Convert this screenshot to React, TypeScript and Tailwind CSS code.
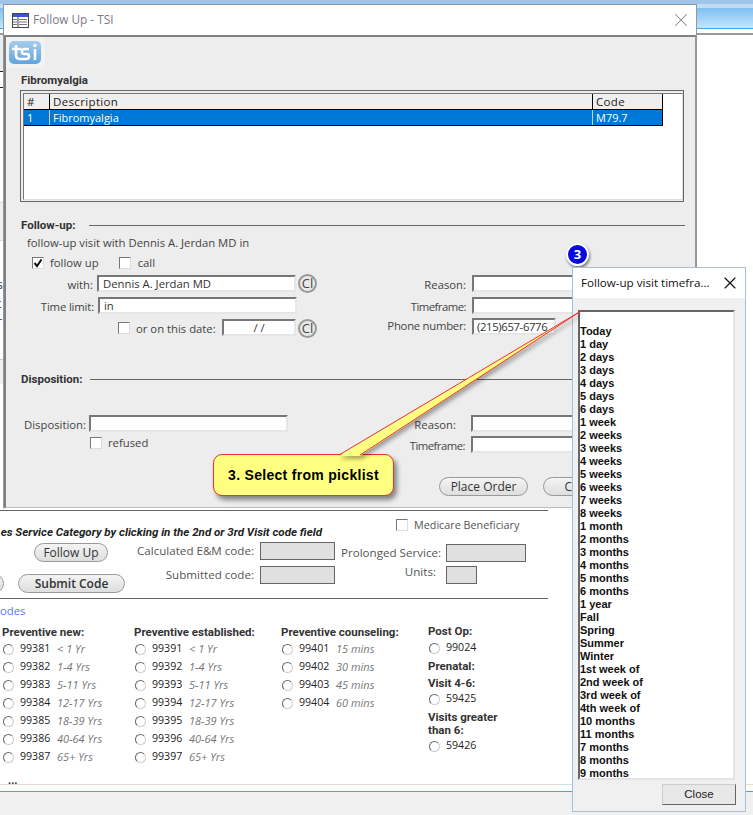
import { X } from 'lucide-react'
import type { ReactNode } from 'react'

const picklist = [
  'Today', '1 day', '2 days', '3 days', '4 days', '5 days', '6 days', '1 week', '2 weeks', '3 weeks',
  '4 weeks', '5 weeks', '6 weeks', '7 weeks', '8 weeks', '1 month', '2 months', '3 months', '4 months',
  '5 months', '6 months', '1 year', 'Fall', 'Spring', 'Summer', 'Winter', '1st week of', '2nd week of',
  '3rd week of', '4th week of', '10 months', '11 months', '7 months', '8 months', '9 months',
]

const codeColumns = [
  {
    title: 'Preventive new:',
    width: 'w-[132px]',
    rows: [['99381', '< 1 Yr'], ['99382', '1-4 Yrs'], ['99383', '5-11 Yrs'], ['99384', '12-17 Yrs'], ['99385', '18-39 Yrs'], ['99386', '40-64 Yrs'], ['99387', '65+ Yrs']],
  },
  {
    title: 'Preventive established:',
    width: 'w-[147px]',
    rows: [['99391', '< 1 Yr'], ['99392', '1-4 Yrs'], ['99393', '5-11 Yrs'], ['99394', '12-17 Yrs'], ['99395', '18-39 Yrs'], ['99396', '40-64 Yrs'], ['99397', '65+ Yrs']],
  },
  {
    title: 'Preventive counseling:',
    width: 'w-[147px]',
    rows: [['99401', '15 mins'], ['99402', '30 mins'], ['99403', '45 mins'], ['99404', '60 mins']],
  },
]

const boldLabel = "font-['Roboto',sans-serif] font-bold text-[11.5px] leading-[14px] text-[#333] whitespace-nowrap"
const label = 'text-[11.3px] leading-[14px] text-[#444] whitespace-nowrap'
const formLabel = 'text-[11.6px] leading-[16px] text-[#555] text-right whitespace-nowrap'

const Check = ({ checked = false }: { checked?: boolean }) => (
  <span className="w-[12px] h-[12px] shrink-0 border border-t-[#777] border-l-[#777] border-r-[#ddd] border-b-[#ddd] bg-white flex items-center justify-center">
    {checked && (
      <svg width="10" height="10" viewBox="0 0 10 10">
        <path d="M1.5 5 L4 8 L8.5 1.5" fill="none" stroke="#111" strokeWidth="2" />
      </svg>
    )}
  </span>
)

const Radio = () => (
  <span className="w-[11px] h-[11px] shrink-0 rounded-full border border-[#ccc] border-t-[#666] border-l-[#666] bg-white" />
)

const Field = ({ className = '', children }: { className?: string; children?: ReactNode }) => (
  <div className={`h-[17px] shrink-0 bg-white border-2 border-t-[#777] border-l-[#777] border-r-[#e6e6e6] border-b-[#e6e6e6] text-[11.3px] leading-[13px] text-[#333] overflow-hidden whitespace-nowrap ${className}`}>
    {children}
  </div>
)

const ClearBtn = () => (
  <span className="w-[19px] h-[19px] rounded-full border-2 border-[#999] bg-[#e8e8e8] flex items-center justify-center text-[13px] leading-none text-[#444] shrink-0">
    Cl
  </span>
)

const Pill = ({ className, children }: { className: string; children?: ReactNode }) => (
  <div className={`h-[19px] shrink-0 rounded-full border border-[#999] bg-gradient-to-b from-[#f4f4f4] to-[#dedede] flex items-center justify-center text-[12px] text-[#333] ${className}`}>
    {children}
  </div>
)

const ReadOnlyBox = ({ className }: { className: string }) => (
  <div className={`h-[18px] shrink-0 bg-[#e0e0e0] border border-[#666] ${className}`} />
)

const Logo = () => (
  <div className="w-[32px] h-[23px] rounded-[5px] bg-gradient-to-b from-[#a5cdee] to-[#5fa4dc]">
    <svg width="32" height="23" viewBox="0 0 32 23">
      <path d="M7 4 V14 Q7 18 11 18 H14 M3 8 H12 M20 8 H15 Q13 8 13 10.5 Q13 13 15 13 H18 Q20 13 20 15.5 Q20 18 17 18 H13 M26 8 V19" fill="none" stroke="#fff" strokeWidth="2.6" />
      <circle cx="26" cy="4.5" r="1.7" fill="#fff" />
    </svg>
  </div>
)

const BackgroundStub = () => (
  <div className="w-[4px] h-[475px] overflow-hidden flex flex-col text-[12px] text-[#333]">
    <div className="h-[37px] shrink-0 border-b border-[#222] bg-[#ececec]" />
    <div className="h-[16px] shrink-0 border-b border-[#222]" />
    <div className="h-[115px] shrink-0 border-b border-[#ddd]" />
    <div className="h-[38px] shrink-0 bg-[#f0f0f0] border-b border-[#ddd]" />
    <div className="shrink-0 mt-[35px] ml-[-3px] flex flex-col">
      <span className="h-[18.5px] leading-[18px]">s</span>
      <span className="h-[18.5px] leading-[18px]">t</span>
      <span className="h-[18.5px] leading-[18px]">r</span>
    </div>
    <div className="h-[25px] shrink-0 mt-[27px] bg-[#f0f0f0] border-t border-[#ccc]" />
  </div>
)

const LowerForm = () => (
  <div className="relative ml-[-40px] w-[588px] h-[274px] shrink-0 border-t border-[#666] flex flex-col">
    <div className="flex items-start h-[28px] shrink-0">
      <div className="w-[362px] mt-[14px] font-['Roboto',sans-serif] font-bold italic text-[11.55px] leading-[14px] text-right whitespace-nowrap text-[#222] flex justify-end">
        es Service Category by clicking in the 2nd or 3rd Visit code field
      </div>
      <div className="ml-[74px] mt-[7px] flex items-center gap-[6px] text-[10.8px] leading-[14px] whitespace-nowrap text-[#555]">
        <Check />
        <span>Medicare Beneficiary</span>
      </div>
    </div>

    <div className="flex items-start mt-[3px] h-[51px] shrink-0">
      <div className="flex flex-col pt-[1px] w-[165px] shrink-0">
        <Pill className="ml-[74px] w-[74px] font-medium">Follow Up</Pill>
        <div className="flex gap-[14px] mt-[12px]">
          <Pill className="w-[44px]" />
          <Pill className="w-[107px] font-semibold">Submit Code</Pill>
        </div>
      </div>
      <div className="ml-[10px] flex flex-col gap-[6px]">
        <div className="flex items-center gap-[6px]">
          <span className={`w-[119px] ${formLabel}`}>Calculated E&amp;M code:</span>
          <ReadOnlyBox className="w-[75px]" />
        </div>
        <div className="flex items-center gap-[6px]">
          <span className={`w-[119px] ${formLabel}`}>Submitted code:</span>
          <ReadOnlyBox className="w-[75px]" />
        </div>
      </div>
      <div className="ml-[6px] pt-[2px] flex flex-col gap-[4px]">
        <div className="flex items-center gap-[10px]">
          <span className={`w-[95px] ${formLabel}`}>Prolonged Service:</span>
          <ReadOnlyBox className="w-[80px]" />
        </div>
        <div className="flex items-center gap-[10px]">
          <span className={`w-[95px] ${formLabel} mt-[-6px]`}>Units:</span>
          <ReadOnlyBox className="w-[31px]" />
        </div>
      </div>
    </div>

    <div className="mt-[5px] h-[1px] shrink-0 bg-[#666]" />
    <div className="mt-[5px] pl-[40px] text-[11.3px] leading-[14px] text-[#5577ff]">odes</div>

    <div className="flex mt-[7px] pl-[42px]">
      {codeColumns.map((col) => (
        <div key={col.title} className={`${col.width} shrink-0`}>
          <div className={boldLabel}>{col.title}</div>
          <div className="flex flex-col mt-[1px]">
            {col.rows.map((row) => (
              <div key={row[0]} className="h-[18px] pl-[1px] flex items-center text-[11px]">
                <Radio />
                <span className="ml-[6px] w-[37px] text-[10.6px] text-[#222]">{row[0]}</span>
                <span className="italic text-[#777] whitespace-nowrap">{row[1]}</span>
              </div>
            ))}
          </div>
        </div>
      ))}
      <div className="w-[80px] shrink-0 mt-[-1px] text-[10.6px] text-[#222]">
        <div className={boldLabel}>Post Op:</div>
        <div className="flex items-center gap-[6px] h-[18px] mt-[1px] pl-[1px]"><Radio /><span>99024</span></div>
        <div className={`${boldLabel} mt-[2px]`}>Prenatal:</div>
        <div className={`${boldLabel} mt-[3px]`}>Visit 4-6:</div>
        <div className="flex items-center gap-[6px] h-[18px] pl-[1px]"><Radio /><span>59425</span></div>
        <div className="font-['Roboto',sans-serif] font-bold text-[11.5px] leading-[13px] text-[#333] mt-[3px]">Visits greater<br />than 6:</div>
        <div className="flex items-center gap-[6px] h-[18px] pl-[1px]"><Radio /><span>59426</span></div>
      </div>
    </div>
    <div className="pl-[48px] mt-[8px] font-bold text-[11px] leading-[12px]">...</div>
  </div>
)

const FollowUpDialog = () => (
  <div className="absolute left-[3px] top-[4px] w-[694px] h-[505px] bg-white border border-[#8c9aa8] border-b-white flex flex-col">
    <div className="h-[30px] shrink-0 flex items-center pl-[8px] pr-[4px]">
      <svg width="17" height="15" viewBox="0 0 17 15">
        <rect x="0.5" y="0.5" width="16" height="14" fill="#fff" stroke="#444" />
        <rect x="1" y="1" width="15" height="3" fill="#3a56d8" />
        <path d="M1 6.5H5M1 9H5M1 11.5H5M7 6.5H15M7 9H15M7 11.5H15" stroke="#777" strokeWidth="1.2" />
        <path d="M6 4V14" stroke="#444" />
      </svg>
      <span className="ml-[4px] text-[11.8px] text-[#7a7a86]">Follow Up - TSI</span>
      <X className="ml-auto w-[22px] h-[22px] text-[#888]" strokeWidth={1.1} />
    </div>

    <div className="flex-1 flex flex-col bg-[#ededed] border-t-2 border-l-2 border-r border-b border-t-[#808080] border-l-[#808080] border-r-[#999] border-b-[#bbb]">
      <div className="w-[39px] h-[31px] shrink-0 bg-[#f2f2f2] pl-[3px] pt-[4px]">
        <Logo />
      </div>
      <div className={`${boldLabel} ml-[15px] mt-[5px]`}>Fibromyalgia</div>

      {/* diagnosis table */}
      <div className="ml-[14px] mt-[3px] w-[664px] h-[112px] shrink-0 border border-[#666] p-[2px] pb-[1px] pr-[0px]">
        <div className="h-full bg-white border border-[#777] border-r-[#ddd] border-b-[#ddd]">
          <div className="w-[639px] flex text-[11.5px] leading-[15px] border-b border-black bg-[#efefef] text-[#222] tracking-[0.35px]">
            <div className="w-[26px] pl-[3px] border-r border-black">#</div>
            <div className="flex-1 pl-[3px] border-r border-black">Description</div>
            <div className="w-[70px] pl-[3px] border-r border-black">Code</div>
          </div>
          <div className="w-[639px] flex text-[11px] leading-[15px] border-b border-black bg-[#0078d7] text-white">
            <div className="w-[26px] pl-[3px] border-r border-[#ccc]">1</div>
            <div className="flex-1 pl-[3px] border-r border-[#ccc]">Fibromyalgia</div>
            <div className="w-[70px] pl-[3px] border-r border-black">M79.7</div>
          </div>
        </div>
      </div>

      {/* follow-up section */}
      <div className="flex items-center ml-[15px] mr-[10px] mt-[16px] gap-[14px]">
        <span className={boldLabel}>Follow-up:</span>
        <div className="flex-1 h-[1px] bg-[#666]" />
      </div>
      <div className={`${label} ml-[21px] mt-[4px] text-[#333]`}>follow-up visit with Dennis A. Jerdan MD in</div>
      <div className={`${label} flex items-center ml-[26px] mt-[6px] h-[14px]`}>
        <Check checked />
        <span className="ml-[6px]">follow up</span>
        <span className="ml-[20px]"><Check /></span>
        <span className="ml-[7px]">call</span>
      </div>

      <div className="flex mt-[5px] shrink-0">
        <div className="w-[311px] shrink-0 flex flex-col gap-[5px]">
          <div className="flex h-[17px] items-start">
            <span className={`${label} w-[88px] text-right pt-[3px]`}>with:</span>
            <Field className="ml-[4px] w-[199px] pl-[4px]">Dennis A. Jerdan MD</Field>
            <span className="ml-[2px] mt-[-1px]"><ClearBtn /></span>
          </div>
          <div className="flex h-[17px] items-start">
            <span className={`${label} w-[88px] text-right pt-[3px] tracking-[-0.15px]`}>Time limit:</span>
            <Field className="ml-[4px] w-[199px] pl-[4px]">in</Field>
          </div>
          <div className="flex h-[17px] items-start pl-[112px]">
            <span className="mt-[3px]"><Check /></span>
            <span className={`${label} ml-[6px] w-[87px] pt-[3px]`}>or on this date:</span>
            <Field className="w-[74px] text-center">/ /</Field>
            <span className="ml-[2px]"><ClearBtn /></span>
          </div>
        </div>
        <div className="ml-[63px] flex flex-col gap-[5px]">
          <div className="flex h-[17px] items-start gap-[6px]">
            <span className={`${label} w-[86px] text-right pt-[3px]`}>Reason:</span>
            <Field className="w-[110px]" />
          </div>
          <div className="flex h-[17px] items-start gap-[6px]">
            <span className={`${label} w-[86px] text-right pt-[3px] tracking-[-0.5px]`}>Timeframe:</span>
            <Field className="w-[110px]" />
          </div>
          <div className="flex h-[17px] items-start gap-[6px] mt-[-1px]">
            <span className={`${label} w-[86px] text-right pt-[1px] tracking-[-0.25px]`}>Phone number:</span>
            <Field className="w-[84px] pl-[3px] tracking-[-0.35px]">(215)657-6776</Field>
          </div>
        </div>
      </div>

      {/* disposition section */}
      <div className="flex items-center ml-[15px] mr-[10px] mt-[36px] gap-[8px]">
        <span className={boldLabel}>Disposition:</span>
        <div className="flex-1 h-[1px] bg-[#666] mt-[1px]" />
      </div>
      <div className="flex mt-[29px] shrink-0">
        <div className="w-[282px] shrink-0 flex flex-col gap-[4px]">
          <div className="flex h-[17px] items-start">
            <span className={`${label} w-[80px] text-right pt-[3px]`}>Disposition:</span>
            <Field className="ml-[3px] w-[199px]" />
          </div>
          <div className={`${label} flex items-center h-[14px] ml-[84px]`}>
            <Check />
            <span className="ml-[6px]">refused</span>
          </div>
        </div>
        <div className="ml-[92px] flex flex-col gap-[4px]">
          <div className="flex h-[17px] items-start gap-[6px]">
            <span className={`${label} w-[85px] text-right pt-[3px] pr-[9px]`}>Reason:</span>
            <Field className="w-[110px]" />
          </div>
          <div className="flex h-[17px] items-start gap-[6px]">
            <span className={`${label} w-[85px] text-right pt-[3px] tracking-[-0.5px]`}>Timeframe:</span>
            <Field className="w-[110px]" />
          </div>
        </div>
      </div>
      <div className="flex gap-[15px] pl-[433px] mt-[24px]">
        <Pill className="w-[89px]">Place Order</Pill>
        <Pill className="w-[80px]">Cancel</Pill>
      </div>
    </div>
  </div>
)

const PicklistPopup = () => (
  <div className="absolute left-[572px] top-[267px] w-[174px] h-[545px] bg-[#f0f0f0] border border-[#a5c0dc] flex flex-col">
    <div className="h-[30px] shrink-0 bg-white flex items-center pl-[8px] pr-[5px] text-[11.6px] text-[#111]">
      <span className="whitespace-nowrap">Follow-up visit timefra...</span>
      <X className="ml-auto w-[20px] h-[20px] text-[#111]" strokeWidth={1.4} />
    </div>
    <div className="ml-[5px] mt-[12px] w-[157px] h-[470px] shrink-0 bg-white border-2 border-t-[#666] border-l-[#666] border-r-[#e4e4e4] border-b-[#e4e4e4] pt-[13px] overflow-hidden">
      {picklist.map((item) => (
        <div key={item} className="h-[13px] leading-[13px] text-[11px] font-bold text-[#111] font-['Liberation_Sans',sans-serif] whitespace-nowrap">
          {item}
        </div>
      ))}
    </div>
    <div className="flex justify-end mt-[4px] pr-[9px]">
      <div className="w-[74px] h-[21px] bg-[#e8e8e8] border border-[#ccc] border-r-[#666] border-b-[#666] flex items-center justify-center text-[11.5px] text-[#222] font-['Liberation_Sans',sans-serif]">
        Close
      </div>
    </div>
  </div>
)

const App = () => {
  return (
    <div className="relative w-[753px] h-[815px] bg-white overflow-hidden flex flex-col font-['Open_Sans','Noto_Sans',sans-serif] text-[#333]">
      {/* window behind the dialogs */}
      <div className="h-[4px] shrink-0 bg-[#9fc4e8]" />
      <div className="h-[4px] shrink-0 bg-[#c4dcf2]" />
      <div className="h-[20px] shrink-0 bg-gradient-to-b from-[#7cc0f2] to-[#c5e4fa]" />
      <div className="h-[1px] shrink-0 bg-[#3aa7ee]" />
      <div className="h-[4px] shrink-0" />
      <div className="h-[2px] shrink-0 bg-[#999]" />
      <BackgroundStub />
      <LowerForm />
      <div className="h-[1px] shrink-0 bg-[#ddd]" />
      <div className="h-[6px] shrink-0" />
      <div className="flex-1 bg-[#f0f0f0] border-t border-[#45a2e6]" />

      <FollowUpDialog />

      {/* step badge */}
      <div className="absolute left-[566px] top-[243px] w-[23px] h-[23px] rounded-full bg-[#0808e0] border-2 border-white shadow-[1px_2px_3px_rgba(0,0,0,0.5)] flex items-center justify-center text-white text-[13px] font-bold">
        3
      </div>

      <PicklistPopup />

      {/* yellow callout */}
      <div className="absolute left-[213px] top-[454px] w-[181px] h-[42px] rounded-[9px] bg-[#ffff80] border border-[#f03030] shadow-[3px_4px_5px_rgba(0,0,0,0.45)] flex items-center justify-center font-bold text-[14px] tracking-[0.3px] text-black font-['Liberation_Sans',sans-serif]">
        3. Select from picklist
      </div>
      <svg width="753" height="815" viewBox="0 0 753 815" className="absolute inset-0 pointer-events-none drop-shadow-[2px_3px_2px_rgba(0,0,0,0.35)]">
        <polygon points="339,456 581,311 360,456" fill="#ffff80" />
        <polyline points="339,455 581,311 360,455" fill="none" stroke="#f03030" strokeWidth="1" />
      </svg>
    </div>
  )
}

export default App
